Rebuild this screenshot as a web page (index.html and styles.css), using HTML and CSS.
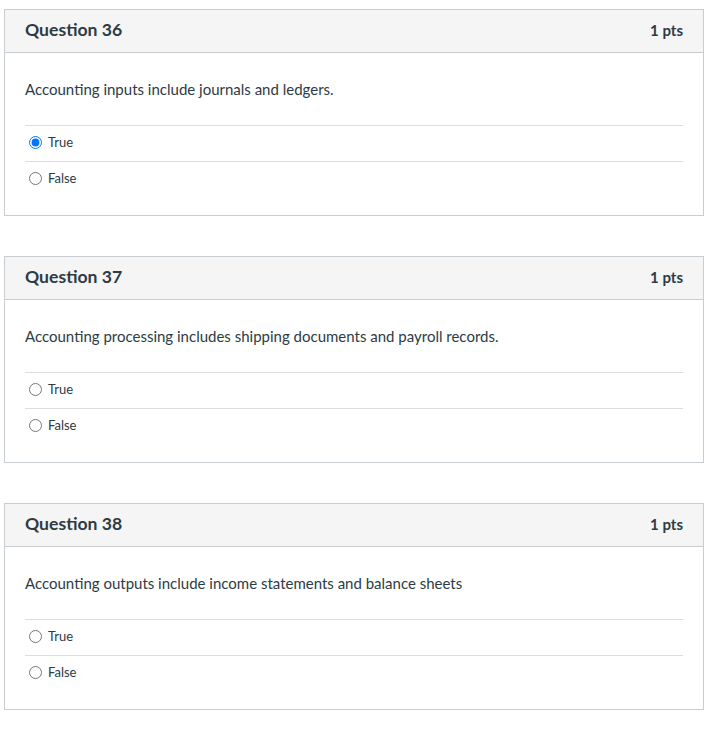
FILE: index.html
```html
<!DOCTYPE html>
<html lang="en">
<head>
<meta charset="utf-8">
<title>Quiz</title>
<link rel="stylesheet" href="styles.css">
</head>
<body>
<main class="quiz">
  <section class="question">
    <header class="q-header">
      <h2 class="q-title">Question 36</h2>
      <span class="q-points">1 pts</span>
    </header>
    <div class="q-body">
      <p class="q-text">Accounting inputs include journals and ledgers.</p>
      <div class="answers">
        <label class="answer"><input type="radio" name="q36" checked><span class="answer-label">True</span></label>
        <label class="answer"><input type="radio" name="q36"><span class="answer-label">False</span></label>
      </div>
    </div>
  </section>
  <section class="question">
    <header class="q-header">
      <h2 class="q-title">Question 37</h2>
      <span class="q-points">1 pts</span>
    </header>
    <div class="q-body">
      <p class="q-text">Accounting processing includes shipping documents and payroll records.</p>
      <div class="answers">
        <label class="answer"><input type="radio" name="q37"><span class="answer-label">True</span></label>
        <label class="answer"><input type="radio" name="q37"><span class="answer-label">False</span></label>
      </div>
    </div>
  </section>
  <section class="question">
    <header class="q-header">
      <h2 class="q-title">Question 38</h2>
      <span class="q-points">1 pts</span>
    </header>
    <div class="q-body">
      <p class="q-text">Accounting outputs include income statements and balance sheets</p>
      <div class="answers">
        <label class="answer"><input type="radio" name="q38"><span class="answer-label">True</span></label>
        <label class="answer"><input type="radio" name="q38"><span class="answer-label">False</span></label>
      </div>
    </div>
  </section>
</main>
</body>
</html>
```

FILE: styles.css
```css
html, body {
  margin: 0;
  padding: 0;
  background: #ffffff;
}

body {
  font-family: Lato, "Liberation Sans", sans-serif;
  color: #2d3b45;
}

.quiz {
  display: flex;
  flex-direction: column;
  gap: 40px;
  padding: 9px 12px 0 4px;
}

.question {
  border: 1px solid #c7cdd1;
  background: #ffffff;
}

.q-header {
  display: flex;
  align-items: center;
  justify-content: space-between;
  height: 43px;
  padding: 0 20px 3px 20px;
  box-sizing: border-box;
  background: #f5f5f5;
  border-bottom: 1px solid #c7cdd1;
}

.q-title {
  margin: 0;
  font-size: 17.6px;
  font-weight: 700;
  line-height: 22px;
}

.q-points {
  font-size: 15px;
  font-weight: 700;
  margin-top: 1px;
}

.q-body {
  padding: 25px 20px 18px 20px;
}

.q-text {
  margin: 0 0 25px 0;
  font-size: 15px;
  line-height: 22px;
}

.answers {
  display: flex;
  flex-direction: column;
}

.answer {
  display: flex;
  align-items: center;
  height: 36px;
  box-sizing: border-box;
  padding-bottom: 4px;
  border-top: 1px solid #dddddd;
  font-size: 13px;
  cursor: pointer;
}

.answer input {
  margin: 2px 3px 0 4px;
}

.answer-label {
  margin-left: 3px;
}
```
